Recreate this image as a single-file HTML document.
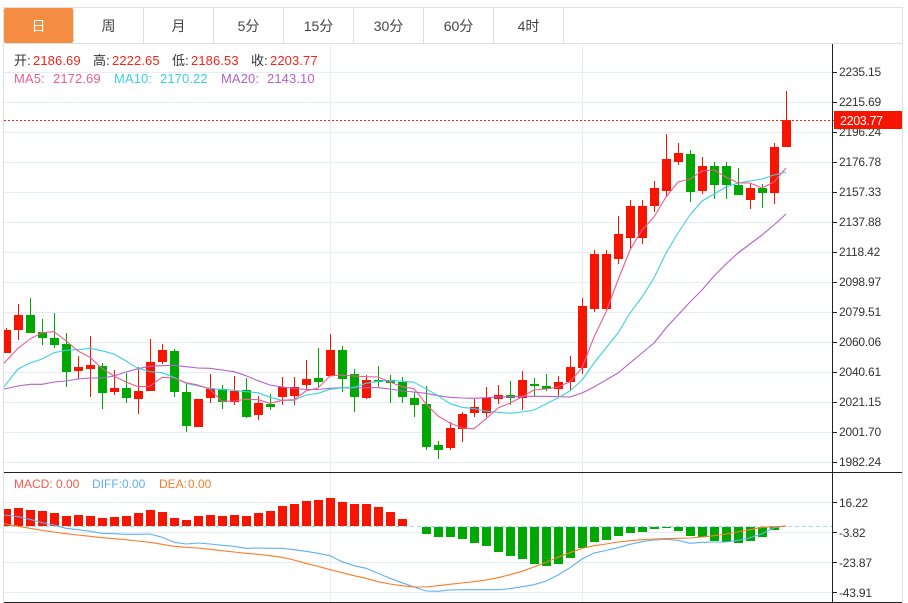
<!DOCTYPE html>
<html><head><meta charset="utf-8"><title>K</title>
<style>
html,body{margin:0;padding:0;background:#fff;width:908px;height:603px;overflow:hidden}
svg{position:absolute;left:0;top:0}
text{font-family:"Liberation Sans","Noto Sans CJK SC",sans-serif}
.ax{font-size:12px;fill:#333;letter-spacing:-.2px}
.t{font-size:14px;fill:#444;text-anchor:middle}
.h{font-size:13px;letter-spacing:.1px}
.m{font-size:12px}
</style></head><body>
<svg width="908" height="603" viewBox="0 0 908 603" xmlns="http://www.w3.org/2000/svg">
<!-- outer frame -->
<path d="M3.5 8V603M3 7.5H903M902.5 8V603M3 43.5H903M73.5 8V43M143.5 8V43M213.5 8V43M283.5 8V43M353.5 8V43M423.5 8V43M493.5 8V43M563.5 8V43" stroke="#dfdfdf" fill="none"/>
<rect x="4" y="8" width="69" height="35" rx="2" fill="#f48d42"/>
<text class="t" x="38.5" y="31" style="fill:#fff">日</text>
<text class="t" x="108.5" y="31">周</text>
<text class="t" x="178.5" y="31">月</text>
<text class="t" x="248.5" y="31">5分</text>
<text class="t" x="318.5" y="31">15分</text>
<text class="t" x="388.5" y="31">30分</text>
<text class="t" x="458.5" y="31">60分</text>
<text class="t" x="528.5" y="31">4时</text>
<!-- grid -->
<path d="M4 72.5H832M4 102.5H832M4 132.5H832M4 162.5H832M4 192.5H832M4 222.5H832M4 252.5H832M4 282.5H832M4 312.5H832M4 342.5H832M4 372.5H832M4 402.5H832M4 432.5H832M4 462.5H832M4 502.5H832M4 532.5H832M4 562.5H832M4 592.5H832M330.5 44V602M582.5 44V602" stroke="#e3edf3" fill="none"/>
<!-- zero dash -->
<path d="M4 526.5H832" stroke="#a6d8ef" stroke-dasharray="4 3" fill="none"/>
<!-- red wicks -->
<path stroke="#f51500" fill="none" d="M6.5 328V353M18.5 304V340M78.5 356V379M90.5 336V397M114.5 370V395M138.5 367V414M150.5 339V391M162.5 344V364M198.5 399V427M210.5 374V403M234.5 376V405M258.5 396V420M282.5 377V405M294.5 377V405M306.5 360V389M330.5 334V376M366.5 375V399M450.5 422V450M462.5 412V442M474.5 399V417M486.5 387V417M498.5 385V404M522.5 371V410M558.5 376V397M570.5 356V390M582.5 298V374M594.5 250V312M606.5 250V311M618.5 216V264M630.5 200V248M642.5 200V244M654.5 181V212M666.5 134V197M678.5 143V165M702.5 157V194M750.5 183V209M774.5 143V204M786.5 91V147"/>
<!-- green wicks -->
<path stroke="#02a802" fill="none" d="M30.5 298V333M42.5 319V345M54.5 313V348M66.5 333V387M102.5 363V409M126.5 373V403M174.5 349V397M186.5 384V432M222.5 385V409M246.5 378V418M270.5 394V410M318.5 348V387M342.5 346V392M354.5 369V412M378.5 366V387M390.5 375V403M402.5 377V403M414.5 392V417M426.5 386V450M438.5 441V459M510.5 381V405M534.5 378V396M546.5 374V391M690.5 150V202M714.5 162V199M726.5 162V199M738.5 168V195M762.5 184V208"/>
<!-- red bodies -->
<path fill="#f51500" d="M4 330h7v23h-7zM14 315h9v15h-9zM74 367h9v4h-9zM86 365h9v4h-9zM110 388h9v4h-9zM134 391h9v8h-9zM146 362h9v29h-9zM158 350h9v12h-9zM194 399h9v28h-9zM206 389h9v9h-9zM230 391h9v11h-9zM254 403h9v12h-9zM278 387h9v10h-9zM290 387h9v9h-9zM302 379h9v6h-9zM326 350h9v26h-9zM362 380h9v18h-9zM446 428h9v20h-9zM458 414h9v15h-9zM470 407h9v6h-9zM482 398h9v15h-9zM494 395h9v4h-9zM518 380h9v18h-9zM554 382h9v7h-9zM566 367h9v15h-9zM578 306h9v62h-9zM590 254h9v55h-9zM602 254h9v55h-9zM614 234h9v25h-9zM626 206h9v32h-9zM638 206h9v32h-9zM650 188h9v18h-9zM662 159h9v32h-9zM674 153h9v9h-9zM698 166h9v25h-9zM746 188h9v12h-9zM770 147h9v46h-9zM782 120h9v27h-9z"/>
<!-- green bodies -->
<path fill="#02a802" d="M26 315h9v18h-9zM38 332h9v6h-9zM50 338h9v7h-9zM62 344h9v28h-9zM98 366h9v27h-9zM122 388h9v10h-9zM170 351h9v41h-9zM182 392h9v34h-9zM218 389h9v13h-9zM242 390h9v27h-9zM266 404h9v3h-9zM314 378h9v4h-9zM338 350h9v29h-9zM350 374h9v23h-9zM374 380h9v2h-9zM386 380h9v3h-9zM398 382h9v15h-9zM410 398h9v7h-9zM422 404h9v43h-9zM434 445h9v5h-9zM506 395h9v3h-9zM530 384h9v2h-9zM542 386h9v3h-9zM686 154h9v38h-9zM710 166h9v19h-9zM722 166h9v19h-9zM734 185h9v10h-9zM758 188h9v5h-9z"/>
<!-- price line -->
<path d="M4 120.5H834" stroke="#f5231a" stroke-dasharray="2 2" fill="none"/>
<!-- MA lines -->
<g fill="none" stroke-width="1.1" stroke-linejoin="round">
<polyline stroke="#b65fcc" points="4,389 18,386 30,384.3 42,384.3 54,382 66,381 78,379 90,378 102,378 114,376 126,372 138,368.7 150,366.3 162,365.7 174,365.3 186,366.7 198,368 210,368.3 222,370 234,371.7 246,375.7 258,380.7 270,385 282,387 294,388.3 306,389.5 318,389.5 330,388.3 342,387.7 354,388 366,387.7 378,387.7 390,389 402,391 414,392 426,393.3 438,395.7 450,397.3 462,398 474,398.3 486,397.7 498,397 510,396.7 522,396.3 534,396.3 546,396.3 558,396.7 570,397 582,393 594,387 606,380 618,373 630,363 642,353 654,343 666,328 678,315 690,302 702,290 714,276 726,264 738,253 750,244 762,235 774,225 786,214"/>
<polyline stroke="#3bd0e2" points="4,386.7 18,369 30,363 42,359 54,352.7 66,350.3 78,349.7 90,348.3 102,350.7 114,354 126,361 138,368.3 150,371.7 162,372.7 174,377.3 186,383.3 198,386 210,388.3 222,389.7 234,390.3 246,391.7 258,392.7 270,397.3 282,400.3 294,400.3 306,395 318,393.3 330,389.3 342,387.7 354,387.3 366,383.3 378,381.3 390,380.7 402,381 414,382.3 426,388.7 438,395.7 450,403.7 462,407.3 474,408.7 486,411 498,412.3 510,413.3 522,412 534,410 546,404 558,397.7 570,391 582,380 594,363 606,348 618,333 630,313 642,297 654,278 666,253 678,233 690,215 702,201 714,194 726,187 738,183 750,181 762,179 774,175 786,172"/>
<polyline stroke="#ee5c93" points="4,363.3 18,348.3 30,339 42,332.7 54,331.7 66,340.7 78,351 90,357.3 102,368.3 114,376 126,382 138,386.7 150,386.3 162,377.3 174,378 186,382.7 198,385 210,389.3 222,401.3 234,401 246,399.3 258,399.7 270,403.3 282,400.3 294,399.7 306,391 318,388 330,376 342,375 354,376 366,376.7 378,377 390,382 402,386.7 414,388.7 426,404 438,416 450,423 462,428 474,428.7 486,418.7 498,408 510,403 522,397 534,390 546,389 558,387 570,381.7 582,368 594,337 606,312 618,280 630,250 642,230 654,217 666,197 678,182 690,179 702,171 714,170 726,177 738,183 750,183 762,188 774,182 786,168"/>
</g>
<!-- MACD bars -->
<path fill="#f51500" d="M4 509h7v17h-7zM14 508h9v18h-9zM26 510h9v16h-9zM38 511h9v15h-9zM50 513h9v13h-9zM62 516h9v10h-9zM74 515h9v11h-9zM86 516h9v10h-9zM98 518h9v8h-9zM110 517h9v9h-9zM122 516h9v10h-9zM134 513h9v13h-9zM146 510h9v16h-9zM158 512h9v14h-9zM170 518h9v8h-9zM182 520h9v6h-9zM194 516h9v10h-9zM206 515h9v11h-9zM218 516h9v10h-9zM230 515h9v11h-9zM242 516h9v10h-9zM254 513h9v13h-9zM266 511h9v15h-9zM278 506h9v20h-9zM290 504h9v22h-9zM302 501h9v25h-9zM314 500h9v26h-9zM326 498h9v28h-9zM338 502h9v24h-9zM350 504h9v22h-9zM362 504h9v22h-9zM374 507h9v19h-9zM386 512h9v14h-9zM398 519h9v7h-9z"/>
<path fill="#02a802" d="M422 527h9v7h-9zM434 527h9v10h-9zM446 527h9v10h-9zM458 527h9v12h-9zM470 527h9v16h-9zM482 527h9v19h-9zM494 527h9v25h-9zM506 527h9v29h-9zM518 527h9v32h-9zM530 527h9v37h-9zM542 527h9v39h-9zM554 527h9v37h-9zM566 527h9v31h-9zM578 527h9v21h-9zM590 527h9v15h-9zM602 527h9v13h-9zM614 527h9v9h-9zM626 527h9v6h-9zM638 527h9v5h-9zM650 527h9v2h-9zM662 527h9v1h-9zM674 527h9v4h-9zM686 527h9v9h-9zM698 527h9v10h-9zM710 527h9v14h-9zM722 527h9v15h-9zM734 527h9v16h-9zM746 527h9v14h-9zM758 527h9v10h-9zM770 527h9v3h-9z"/>
<g fill="none" stroke-width="1.1" stroke-linejoin="round">
<polyline stroke="#5fb0f2" points="4,515 18,516.7 30,519.3 42,522.7 54,525 66,528.3 78,529.7 90,531.3 102,533.3 114,533.7 126,534.3 138,534.3 150,534 162,537.3 174,542.3 186,544 198,543 210,544 222,545.3 234,546.3 246,548.3 258,548 270,548.3 282,548.3 294,549.7 306,551.3 318,553.3 330,555.7 342,561.7 354,565.7 366,568.3 378,573.3 390,578.3 402,582.7 414,587 426,591 438,591.3 450,590 462,589.7 474,589.7 486,589.7 498,589.7 510,588.7 522,586.7 534,584.7 546,581 558,575 570,567.7 582,559 594,553 606,550.5 618,547.7 630,544.3 642,541.7 654,540 666,539.3 678,540.3 690,543.3 702,542.3 714,542 726,542 738,540.3 750,537.7 762,533.7 774,527.7 786,526"/>
<polyline stroke="#f97d28" points="4,523.7 18,526.3 30,528.3 42,530.3 54,532 66,533.7 78,535 90,536.3 102,537.7 114,538.7 126,539.7 138,541 150,542.3 162,544.3 174,546.3 186,547.3 198,548 210,549.3 222,550.7 234,552 246,553.3 258,554.3 270,555.7 282,557.3 294,560 306,563.3 318,566.3 330,569.7 342,572.7 354,575.7 366,578.3 378,581.7 390,584 402,585.7 414,587 426,587 438,585.7 450,584.3 462,583 474,581.7 486,580 498,577.7 510,574.7 522,571.3 534,567 546,562.3 558,557.3 570,552.7 582,548.3 594,545.7 606,544 618,542 630,540.7 642,539.7 654,539 666,538.7 678,538.3 690,538 702,537 714,535.7 726,534 738,532 750,529.7 762,527.3 774,526.7 786,526"/>
</g>
<!-- axes -->
<path d="M832.5 44V602M4 472.5H902M4 602.5H902M832 72.5h5M832 102.5h5M832 132.5h5M832 162.5h5M832 192.5h5M832 222.5h5M832 252.5h5M832 282.5h5M832 312.5h5M832 342.5h5M832 372.5h5M832 402.5h5M832 432.5h5M832 462.5h5M832 502.5h5M832 532.5h5M832 562.5h5M832 592.5h5" stroke="#222" fill="none"/>
<g class="ax">
<text class="ax" x="839" y="76">2235.15</text>
<text class="ax" x="839" y="106">2215.69</text>
<text class="ax" x="839" y="136">2196.24</text>
<text class="ax" x="839" y="166">2176.78</text>
<text class="ax" x="839" y="196">2157.33</text>
<text class="ax" x="839" y="226">2137.88</text>
<text class="ax" x="839" y="256">2118.42</text>
<text class="ax" x="839" y="286">2098.97</text>
<text class="ax" x="839" y="316">2079.51</text>
<text class="ax" x="839" y="346">2060.06</text>
<text class="ax" x="839" y="376">2040.61</text>
<text class="ax" x="839" y="406">2021.15</text>
<text class="ax" x="839" y="436">2001.70</text>
<text class="ax" x="839" y="466">1982.24</text>
<text class="ax" x="839" y="507">16.22</text>
<text class="ax" x="839" y="537">-3.82</text>
<text class="ax" x="839" y="567">-23.87</text>
<text class="ax" x="839" y="597">-43.91</text>
</g>
<rect x="834" y="111" width="68" height="18" fill="#f51500"/>
<text x="840" y="125" style="fill:#fff;font-size:12.5px;letter-spacing:-.35px">2203.77</text>
<!-- legend -->
<g class="h" fill="#f5231a">
<text class="h" x="14" y="65" style="fill:#333">开:</text><text class="h" x="33" y="65">2186.69</text>
<text class="h" x="93" y="65" style="fill:#333">高:</text><text class="h" x="112" y="65">2222.65</text>
<text class="h" x="172" y="65" style="fill:#333">低:</text><text class="h" x="191" y="65">2186.53</text>
<text class="h" x="251" y="65" style="fill:#333">收:</text><text class="h" x="270" y="65">2203.77</text>
</g>
<g class="h">
<text class="h" x="14" y="83" fill="#ee5c93">MA5:</text><text class="h" x="53" y="83" fill="#ee5c93">2172.69</text>
<text class="h" x="114" y="83" fill="#3bd0e2">MA10:</text><text class="h" x="160" y="83" fill="#3bd0e2">2170.22</text>
<text class="h" x="221" y="83" fill="#b65fcc">MA20:</text><text class="h" x="267" y="83" fill="#b65fcc">2143.10</text>
</g>
<text class="m" x="14" y="488" fill="#f5584a">MACD:</text><text class="m" x="56" y="488" fill="#f5584a">0.00</text>
<text class="m" x="92" y="488" fill="#5fb0f2">DIFF:</text><text class="m" x="122" y="488" fill="#5fb0f2">0.00</text>
<text class="m" x="159" y="488" fill="#f97d28">DEA:</text><text class="m" x="188" y="488" fill="#f97d28">0.00</text>
</svg>
</body></html>
